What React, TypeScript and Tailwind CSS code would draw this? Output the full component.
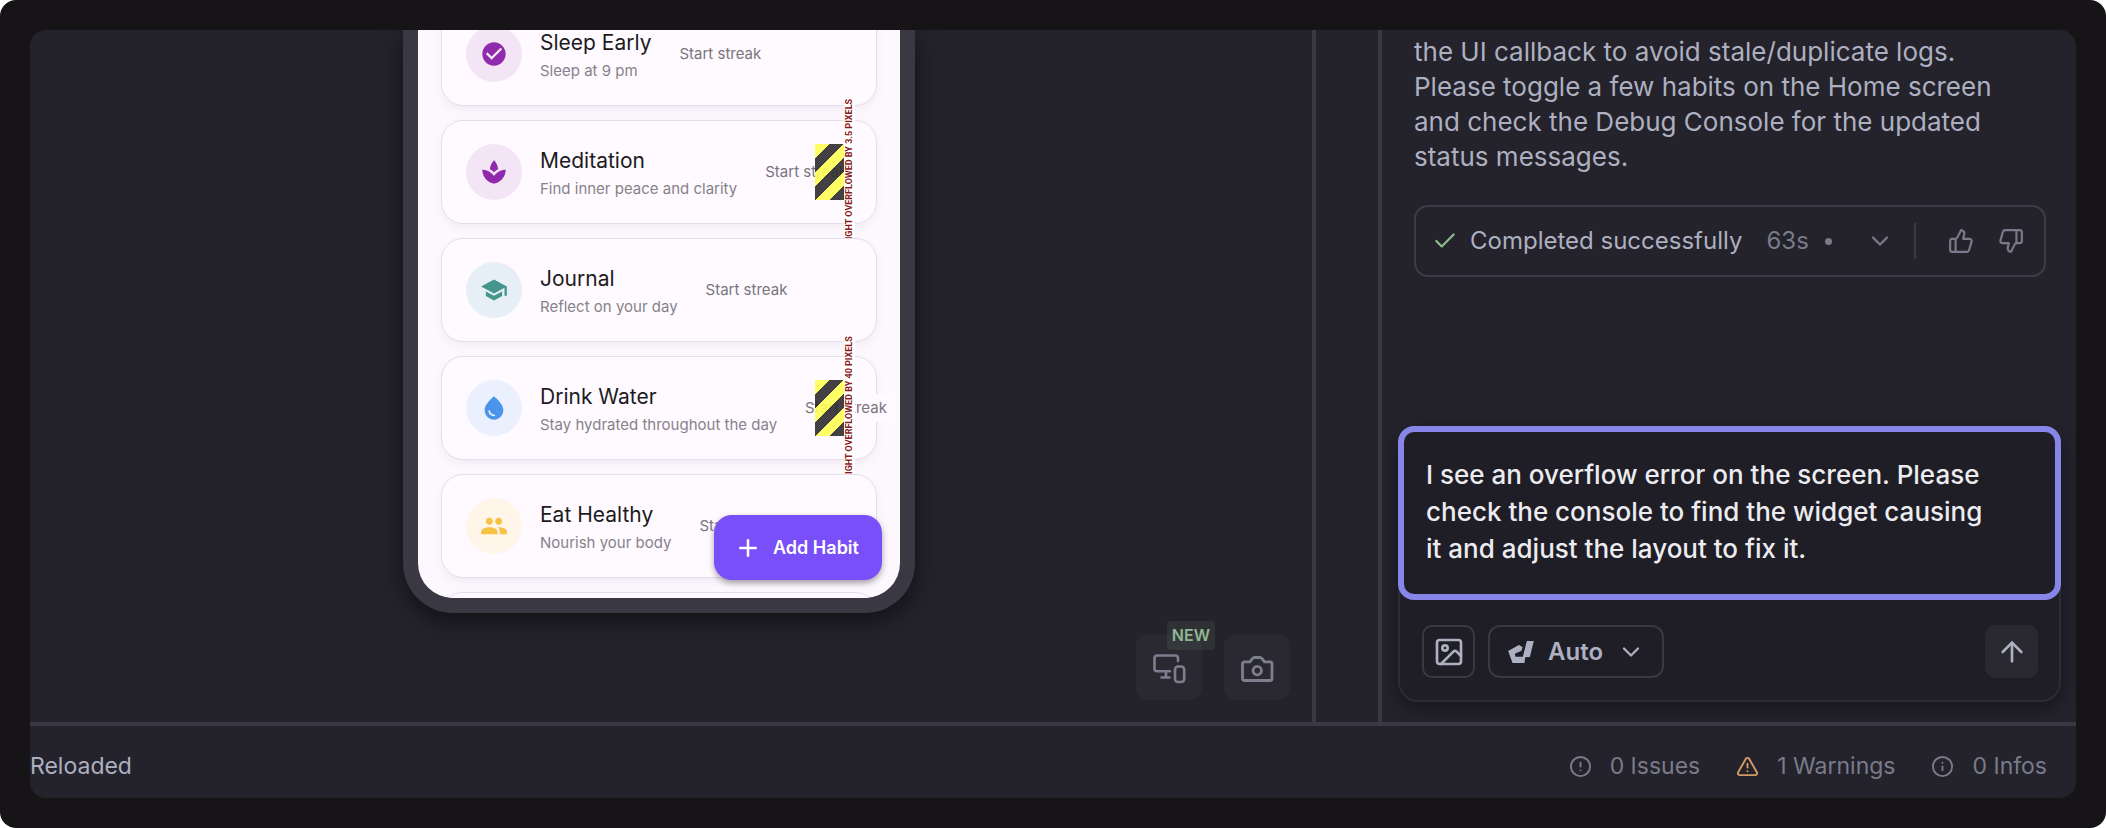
import React from "react";
import {
  MdCheckCircle,
  MdSpa,
  MdSchool,
  MdWaterDrop,
  MdPeople,
  MdAdd,
} from "react-icons/md";
import {
  ArrowUp,
  Check,
  ChevronDown,
  CircleAlert,
  Image,
  Info,
  ThumbsDown,
  ThumbsUp,
  TriangleAlert,
} from "lucide-react";

const HABITS = [
  { name: "Sleep Early", note: "Sleep at 9 pm", Icon: MdCheckCircle, tone: "bg-[#f3e5f5] text-[#8e2aab]" },
  { name: "Meditation", note: "Find inner peace and clarity", Icon: MdSpa, tone: "bg-[#f3e5f5] text-[#8e2aab]", overflow: "3.5" },
  { name: "Journal", note: "Reflect on your day", Icon: MdSchool, tone: "bg-[#e6eff5] text-[#44958b]" },
  { name: "Drink Water", note: "Stay hydrated throughout the day", Icon: MdWaterDrop, tone: "bg-[#eaf0fe] text-[#4a94ec]", overflow: "40" },
  { name: "Eat Healthy", note: "Nourish your body", Icon: MdPeople, tone: "bg-[#fff5e8] text-[#f6c244]" },
];

const CARD = "relative flex h-[104px] shrink-0 items-center rounded-[22px] border border-[#e4dfe8] bg-[#fefaff] pl-6 shadow-[0_4px_10px_rgba(80,40,90,0.06)]";

function HabitCard({ habit }: { habit: (typeof HABITS)[number] }) {
  const { Icon } = habit;
  return (
    <li className={CARD}>
      <span className={`mr-[18px] flex size-14 shrink-0 items-center justify-center rounded-full ${habit.tone}`}>
        <Icon size={28} />
      </span>
      <div className="shrink-0 pt-1 whitespace-nowrap">
        <h3 className="text-[21px] leading-7 text-[#1d1b20]">{habit.name}</h3>
        <p className="mt-0.5 text-[15px] leading-6 text-[#86828a]">{habit.note}</p>
      </div>
      <span className="ml-5 shrink-0 bg-[#fefaff] px-2 py-1 text-[15px] leading-5 whitespace-nowrap text-[#79757d]">
        Start streak
      </span>
      {habit.overflow && (
        <>
          <span className="absolute top-1/2 right-[32px] h-14 w-[29px] -translate-y-1/2 bg-[repeating-linear-gradient(135deg,#ffff55_0_10px,#2f2c2f_10px_20px)] opacity-90" />
          <span className="absolute top-1/2 right-[21px] w-[11px] -translate-y-1/2 rotate-180 bg-white font-['Roboto',sans-serif] text-[9px] leading-[11px] font-bold whitespace-nowrap text-[#8b1a1a] [writing-mode:vertical-rl]">
            RIGHT OVERFLOWED BY {habit.overflow} PIXELS
          </span>
        </>
      )}
    </li>
  );
}

function DevicesIcon() {
  return (
    <svg width="33" height="30" viewBox="0 0 33 30" fill="none" stroke="currentColor" strokeWidth="2.6" strokeLinecap="round" strokeLinejoin="round">
      <path d="M25 7V4a2.5 2.5 0 0 0-2.5-2.5H4A2.5 2.5 0 0 0 1.500 4v10.700A2.500 2.500 0 0 0 4 17.200h13M13 17.500v6M8.500 23.500h8" />
      <rect x="22" y="12.500" width="9.200" height="15.500" rx="3" />
    </svg>
  );
}

function CameraIcon() {
  return (
    <svg width="33" height="26" viewBox="0 0 33 26" fill="none" stroke="currentColor" strokeWidth="2.8" strokeLinejoin="round">
      <path d="M3.500 5.800H9l2.500-3.300q.8-1 2-1h5.500q1.200 0 2 1l2.500 3.300H29a2 2 0 0 1 2 2v14.700a2 2 0 0 1-2 2H3.500a2 2 0 0 1-2-2V7.800a2 2 0 0 1 2-2z" />
      <circle cx="16.250" cy="14.600" r="4.200" />
    </svg>
  );
}

function Preview() {
  return (
    <section className="relative flex min-w-0 flex-1 justify-center pr-6 pb-[109px]">
      <div className="relative flex w-[512px] flex-col rounded-b-[50px] border-x-[15px] border-b-[15px] border-[#393843] bg-[#fdf8fe] shadow-[0_8px_24px_rgba(0,0,0,0.5)]">
        <ul className="flex min-h-0 flex-1 flex-col gap-[14px] overflow-hidden rounded-b-[35px] px-[23px]">
          <li className="-mt-[42px] shrink-0" aria-hidden="true" />
          {HABITS.map((habit) => (
            <HabitCard key={habit.name} habit={habit} />
          ))}
          <li className={CARD} />
        </ul>
        <button className="absolute right-[18px] bottom-[18px] flex h-[65px] w-[168px] items-center justify-center gap-[10px] rounded-[18px] bg-[#784ff8] text-[18px] font-semibold whitespace-nowrap text-white shadow-[0_3px_6px_rgba(0,0,0,0.35)]">
          <MdAdd size={30} className="-ml-1" />
          Add Habit
        </button>
      </div>

      <div className="absolute right-[22px] bottom-[22px] flex gap-[22px]">
        <button aria-label="Devices" className="relative flex size-[66px] items-center justify-center rounded-xl bg-[#2a2932] pt-1 text-[#7d7f8e]">
          <DevicesIcon />
          <span className="absolute -top-[13px] -right-[13px] rounded-sm bg-[#8fbc8f]/10 px-[5px] text-[16px] leading-[29px] font-semibold text-[#8fb893]">
            NEW
          </span>
        </button>
        <button aria-label="Screenshot" className="flex size-[66px] items-center justify-center rounded-xl bg-[#2a2932] pt-1 text-[#7d7f8e]">
          <CameraIcon />
        </button>
      </div>
    </section>
  );
}

function Chat() {
  return (
    <aside className="flex w-[698px] shrink-0 flex-col border-l-4 border-[#393843]">
      <div className="pt-1 pr-[30px] pl-8">
        <p className="pr-6 text-[26px] leading-[35px] text-[#adb0c0]">
          the UI callback to avoid stale/duplicate logs. Please toggle a few habits on the Home screen
          and check the Debug Console for the updated status messages.
        </p>
        <div className="mt-[31px] flex h-[72px] items-center rounded-[14px] border-2 border-[#3d3c48] px-5 text-[24px]">
          <Check size={26} strokeWidth={2} className="mr-3 -ml-1 text-[#8fbc8f]" />
          <span className="text-[#adb0c0]">Completed successfully</span>
          <span className="ml-6 text-[#797b8a]">63s</span>
          <span className="ml-4 size-[7px] rounded-full bg-[#797b8a]" />
          <div className="ml-auto flex items-center text-[#797b8a]">
            <button aria-label="Details"><ChevronDown size={28} strokeWidth={2} /></button>
            <span className="mr-8 ml-5 h-9 w-0.5 bg-[#393843]" />
            <button aria-label="Good response" className="mr-6"><ThumbsUp size={26} strokeWidth={2} /></button>
            <button aria-label="Bad response"><ThumbsDown size={26} strokeWidth={2} /></button>
          </div>
        </div>
      </div>

      <form className="mt-auto mr-[15px] mb-5 ml-4 rounded-[20px] border-2 border-[#2d2c31] bg-[#1f1d25] shadow-[0_6px_18px_rgba(0,0,0,0.4)]">
        <textarea
          aria-label="Message"
          rows={3}
          className="-m-0.5 block h-[174px] w-[calc(100%+4px)] resize-none rounded-2xl border-[6px] border-[#8885e8] bg-[#1f1d25] pt-6 pr-[60px] pl-[22px] text-[26px] leading-[37px] font-medium text-[#ececf0] outline-none"
          defaultValue="I see an overflow error on the screen. Please check the console to find the widget causing it and adjust the layout to fix it."
        />
        <div className="flex items-center pt-[27px] pr-[21px] pb-[22px] pl-[22px] text-[#adb0c0]">
          <button type="button" aria-label="Attach image" className="flex size-[53px] items-center justify-center rounded-[10px] border-2 border-[#393843]">
            <Image size={32} strokeWidth={2} />
          </button>
          <button type="button" className="ml-[13px] flex h-[53px] w-44 items-center rounded-xl border-2 border-[#393843] pl-[18px] text-[24px] font-semibold">
            <svg width="26" height="22" viewBox="0 0 77 66" fill="currentColor" className="mr-[14px]">
              <path d="M32 12 43 18 40 29 20 38 22 47H44L56 0H77L65 48 51 49 49 66H13L0 30z" />
            </svg>
            Auto
            <ChevronDown size={28} strokeWidth={2} className="ml-[14px]" />
          </button>
          <button type="submit" aria-label="Send" className="ml-auto flex size-[53px] items-center justify-center rounded-[10px] bg-[#2a2932]">
            <ArrowUp size={32} strokeWidth={2} />
          </button>
        </div>
      </form>
    </aside>
  );
}

export default function App() {
  return (
    <div className="h-screen bg-white font-['Inter',sans-serif]">
      <div className="h-full rounded-2xl bg-[#161417] p-[30px]">
        <div className="flex h-full flex-col overflow-hidden rounded-2xl bg-[#24222b]">
          <main className="flex min-h-0 flex-1">
            <Preview />
            <div className="w-[66px] shrink-0 border-l-4 border-[#393843]" />
            <Chat />
          </main>
          <footer className="flex h-[76px] shrink-0 items-center border-t-4 border-[#393843] pt-2 pr-[29px] text-[23px] text-[#797b8a]">
            <span className="text-[#adb0c0]">Reloaded</span>
            <div className="ml-auto flex items-center gap-9">
              <span className="flex items-center gap-[18px]"><CircleAlert size={23} strokeWidth={2} />0 Issues</span>
              <span className="flex items-center gap-[18px]"><TriangleAlert size={23} strokeWidth={2} className="text-[#d19a66]" />1 Warnings</span>
              <span className="flex items-center gap-[18px]"><Info size={23} strokeWidth={2} />0 Infos</span>
            </div>
          </footer>
        </div>
      </div>
    </div>
  );
}
